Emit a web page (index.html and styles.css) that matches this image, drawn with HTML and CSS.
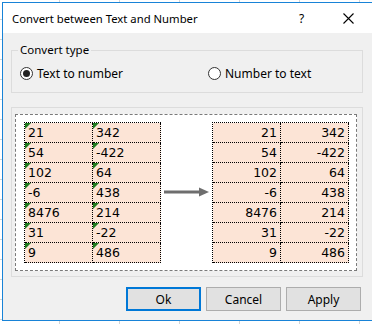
FILE: index.html
```html
<!DOCTYPE html>
<html lang="en">
<head>
    <meta charset="UTF-8">
    <title>Convert between Text and Number</title>
    <link rel="stylesheet" href="styles.css">
</head>
<body>
    <div class="dialog">
        <div class="titlebar">
            <span class="title">Convert between Text and Number</span>
            <span class="help">?</span>
            <span class="close">
                <svg width="11" height="11" viewBox="0 0 11 11"><path d="M0.5 0.5 L10.5 10.5 M10.5 0.5 L0.5 10.5" stroke="#000" stroke-width="1.1" fill="none"/></svg>
            </span>
        </div>
        <div class="content">
            <fieldset class="group type-group">
                <legend>Convert type</legend>
                <div class="radios">
                    <label class="radio first"><span class="dot checked"></span>Text to number</label>
                    <label class="radio"><span class="dot"></span>Number to text</label>
                </div>
            </fieldset>

            <div class="group preview-group">
                <div class="preview">
                    <div class="sheet left">
                        <div>21</div><div>342</div>
                        <div>54</div><div>-422</div>
                        <div>102</div><div>64</div>
                        <div>-6</div><div>438</div>
                        <div>8476</div><div>214</div>
                        <div>31</div><div>-22</div>
                        <div>9</div><div>486</div>
                    </div>
                    <div class="arrow">
                        <svg width="46" height="10" viewBox="0 0 46 10"><path d="M0 5 H36" stroke="#6e6e6e" stroke-width="3"/><path d="M35 0.5 L45 5 L35 9.5 Z" fill="#6e6e6e"/></svg>
                    </div>
                    <div class="sheet right">
                        <div>21</div><div>342</div>
                        <div>54</div><div>-422</div>
                        <div>102</div><div>64</div>
                        <div>-6</div><div>438</div>
                        <div>8476</div><div>214</div>
                        <div>31</div><div>-22</div>
                        <div>9</div><div>486</div>
                    </div>
                </div>
            </div>

            <div class="buttons">
                <button class="default">Ok</button>
                <button>Cancel</button>
                <button>Apply</button>
            </div>
        </div>
    </div>
</body>
</html>
```

FILE: styles.css
```css
html, body {margin: 0; overflow: hidden;}
body {
    width: 372px; height: 324px;
    font-family: "Noto Sans", sans-serif; font-size: 12px; color: #000;
    background-color: #fff;
    background-image:
        repeating-linear-gradient(to bottom, transparent 0 19px, #d4d4d4 19px 20px),
        repeating-linear-gradient(to right, transparent 0 59px, #d4d4d4 59px 60px);
}

.dialog {
    margin: 2px 0 0 2px; width: 370px; height: 317px;
    border: 1px solid #1883d7; background: #f0f0f0;
    display: flex; flex-direction: column;
}

.titlebar {height: 30px; background: #fff; display: flex; align-items: center; flex-shrink: 0;}
.title {margin-left: 9px; flex: 1; font-size: 11.3px;}
.help {width: 7px; margin-right: 37px; font-size: 12px;}
.close {width: 11px; margin-right: 19px; display: flex;}

.content {flex: 1; display: flex; flex-direction: column; padding: 0 10px 0 8px;}

.group {border: 1px solid #dcdcdc; margin: 0;}
.type-group {margin-top: 9px; padding: 0 0 9px 0;}
.type-group legend {margin-left: 6px; padding: 0 2px; line-height: 16px; font-size: 11.5px;}
.radios {display: flex; padding-top: 5px; height: 20px; align-items: center;}
.radio {display: flex; align-items: center; font-size: 12px;}
.radio.first {width: 188px;}
.dot {
    width: 11px; height: 11px; border: 1px solid #333; border-radius: 50%;
    background: #fff; margin: 0 4px 0 8px; display: flex; align-items: center; justify-content: center;
}
.dot.checked::after {content: ""; width: 7px; height: 7px; border-radius: 50%; background: #222;}

.preview-group {margin-top: 14px; padding: 6px 5px 5px 3px;}
.preview {
    border: 1px dashed #7a7a7a; background: #fff;
    display: flex; align-items: center; justify-content: space-between;
    padding: 7px 7px 7px 8px;
}

.sheet {
    display: grid; grid-template-columns: 68px 68px; grid-auto-rows: 20px;
    border-left: 1px dotted #000; border-top: 1px dotted #000;
    font-family: "DejaVu Sans", sans-serif; font-size: 12.5px;
}
.sheet div {
    background: #fce4d6; border-right: 1px dotted #000; border-bottom: 1px dotted #000;
    line-height: 19px; position: relative;
}
.sheet.left div {padding-left: 3px;}
.sheet.left div::before {
    content: ""; position: absolute; left: 0; top: 0;
    border-top: 6px solid #1e7b1e; border-right: 6px solid transparent;
}
.sheet.right div {text-align: right; padding-right: 3px;}

.arrow {display: flex; margin-top: -2px;}

.buttons {display: flex; justify-content: flex-end; gap: 5px; margin-top: 10px; padding-right: 2px;}
.buttons button {
    width: 75px; height: 24px; background: #e1e1e1; border: 1px solid #adadad;
    font-family: "Noto Sans", sans-serif; font-size: 12px; color: #000; padding: 0;
}
.buttons button.default {border: 2px solid #0078d7;}
```
